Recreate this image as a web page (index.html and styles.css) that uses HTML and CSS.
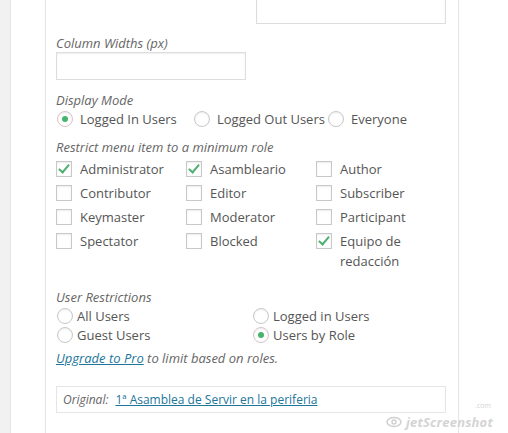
FILE: index.html
```html
<!DOCTYPE html>
<html lang="es">
<head>
  <meta charset="UTF-8" />
  <meta name="viewport" content="width=device-width, initial-scale=1" />
  <title>Menu item settings</title>
  <link rel="stylesheet" href="styles.css">
</head>
<body>
  <div class="screen">
    <div class="panel">
      <div class="top-row">
        <textarea class="top-area"></textarea>
      </div>

      <label class="field-label" for="colWidths">Column Widths (px)</label>
      <input type="text" id="colWidths" class="text-input" />

      <p class="field-label gap-display">Display Mode</p>
      <div class="mode-line">
        <label class="opt opt-in"><input type="radio" name="mode" checked /> Logged In Users</label>
        <label class="opt opt-out"><input type="radio" name="mode" /> Logged Out Users</label>
        <label class="opt"><input type="radio" name="mode" /> Everyone</label>
      </div>

      <p class="field-label gap-restrict">Restrict menu item to a minimum role</p>
      <div class="role-grid">
        <label class="role"><input type="checkbox" checked /><span>Administrator</span></label>
        <label class="role"><input type="checkbox" checked /><span>Asambleario</span></label>
        <label class="role"><input type="checkbox" /><span>Author</span></label>
        <label class="role"><input type="checkbox" /><span>Contributor</span></label>
        <label class="role"><input type="checkbox" /><span>Editor</span></label>
        <label class="role"><input type="checkbox" /><span>Subscriber</span></label>
        <label class="role"><input type="checkbox" /><span>Keymaster</span></label>
        <label class="role"><input type="checkbox" /><span>Moderator</span></label>
        <label class="role"><input type="checkbox" /><span>Participant</span></label>
        <label class="role"><input type="checkbox" /><span>Spectator</span></label>
        <label class="role"><input type="checkbox" /><span>Blocked</span></label>
        <label class="role"><input type="checkbox" checked /><span>Equipo de redacción</span></label>
      </div>

      <p class="field-label gap-users">User Restrictions</p>
      <div class="users-grid">
        <label class="uopt"><input type="radio" name="users" /> All Users</label>
        <label class="uopt"><input type="radio" name="users" /> Logged in Users</label>
        <label class="uopt"><input type="radio" name="users" /> Guest Users</label>
        <label class="uopt"><input type="radio" name="users" checked /> Users by Role</label>
      </div>
      <p class="upgrade"><a href="#">Upgrade to Pro</a> to limit based on roles.</p>

      <div class="original">
        <span class="original-label">Original:</span>
        <a href="#">1ª Asamblea de Servir en la periferia</a>
      </div>
    </div>
  </div>

  <div class="watermark">
    <svg width="16" height="12" viewBox="0 0 16 12" fill="none" stroke="#d0d0d0" stroke-width="1.5">
      <ellipse cx="8" cy="6" rx="7" ry="4.5" />
      <circle cx="8" cy="6" r="2" />
    </svg>
    <span class="wm-text">jetScreenshot</span>
    <span class="wm-com">.com</span>
  </div>
</body>
</html>
```

FILE: styles.css
```css
body {
  margin: 0;
  background: #f1f1f1;
  font-family: 'Open Sans', 'Noto Sans', sans-serif;
  font-size: 13px;
  color: #555;
  overflow: hidden;
  height: 433px;
}

.screen {
  display: flow-root;
  margin-left: 10px;
  border-left: 1px solid #e5e5e5;
  background: #fff;
  height: 433px;
  padding-left: 34px;
  overflow: hidden;
}

.panel {
  width: 390px;
  margin-top: -40px;
  padding: 0 12px 0 10px;
  border-left: 1px solid #e5e5e5;
  border-right: 1px solid #e5e5e5;
  height: 520px;
}

.top-row {
  padding-left: 200px;
}

.top-area {
  display: block;
  box-sizing: border-box;
  width: 190px;
  height: 64px;
  border: 1px solid #ddd;
  box-shadow: inset 0 1px 2px rgba(0,0,0,0.07);
  resize: none;
  margin: 0;
}

.field-label {
  display: block;
  margin: 10px 0 0;
  font-style: italic;
  line-height: 18px;
  color: #666;
}

.gap-display { margin-top: 11px; }
.gap-restrict { margin-top: 10px; }
.gap-users { margin-top: 15px; }

.text-input {
  display: block;
  box-sizing: border-box;
  width: 190px;
  height: 28px;
  margin: 0;
  border: 1px solid #ddd;
  box-shadow: inset 0 1px 2px rgba(0,0,0,0.07);
}

input[type="radio"],
input[type="checkbox"] {
  appearance: none;
  -webkit-appearance: none;
  box-sizing: border-box;
  width: 16px;
  height: 16px;
  margin: 0;
  border: 1px solid #c8c8c8;
  background: #fff;
  box-shadow: inset 0 1px 2px rgba(0,0,0,0.08);
  position: relative;
  flex: none;
}

input[type="radio"] {
  border-radius: 50%;
}

input[type="radio"]:checked {
  border-color: #d9c3c8;
}

input[type="radio"]:checked::before {
  content: "";
  position: absolute;
  left: 4px;
  top: 4px;
  width: 6px;
  height: 6px;
  border-radius: 50%;
  background: #46b46b;
}

input[type="checkbox"]:checked::before {
  content: "";
  position: absolute;
  left: 4px;
  top: 0;
  width: 4px;
  height: 9px;
  border-right: 2px solid #4fb06f;
  border-bottom: 2px solid #4fb06f;
  transform: rotate(40deg);
}

.mode-line {
  display: flex;
  align-items: center;
  height: 19px;
}

.opt {
  display: flex;
  align-items: center;
  gap: 7px;
}

.opt input {
  margin-left: 1px;
}

.opt-in { width: 137px; }
.opt-out { width: 134px; }

.role-grid {
  display: grid;
  grid-template-columns: 130px 130px 130px;
  margin-top: 1px;
}

.role {
  display: flex;
  align-items: flex-start;
  padding: 2px 0;
  line-height: 20px;
}

.role input {
  margin: 2px 8px 0 0;
}

.users-grid {
  display: grid;
  grid-template-columns: 196px 194px;
}

.uopt {
  display: flex;
  align-items: center;
  gap: 4px;
  height: 19px;
}

.uopt input {
  margin-left: 1px;
}

.upgrade {
  margin: 5px 0 0;
  line-height: 18px;
  font-style: italic;
  color: #666;
}

a {
  color: #21759b;
}

.original {
  box-sizing: border-box;
  margin-top: 19px;
  height: 27px;
  border: 1px solid #e5e5e5;
  padding: 0 6px;
  display: flex;
  align-items: center;
  gap: 7px;
  font-size: 12px;
}

.original-label {
  font-style: italic;
  color: #666;
}

.watermark {
  position: absolute;
  left: 386px;
  top: 415px;
  display: flex;
  align-items: center;
  gap: 4px;
  color: #d4d4d4;
}

.wm-text {
  font-style: italic;
  font-weight: bold;
  font-size: 13px;
  line-height: 14px;
  letter-spacing: 0.2px;
}

.wm-com {
  position: absolute;
  right: 2px;
  top: -13px;
  font-size: 7px;
  line-height: 7px;
}
```
